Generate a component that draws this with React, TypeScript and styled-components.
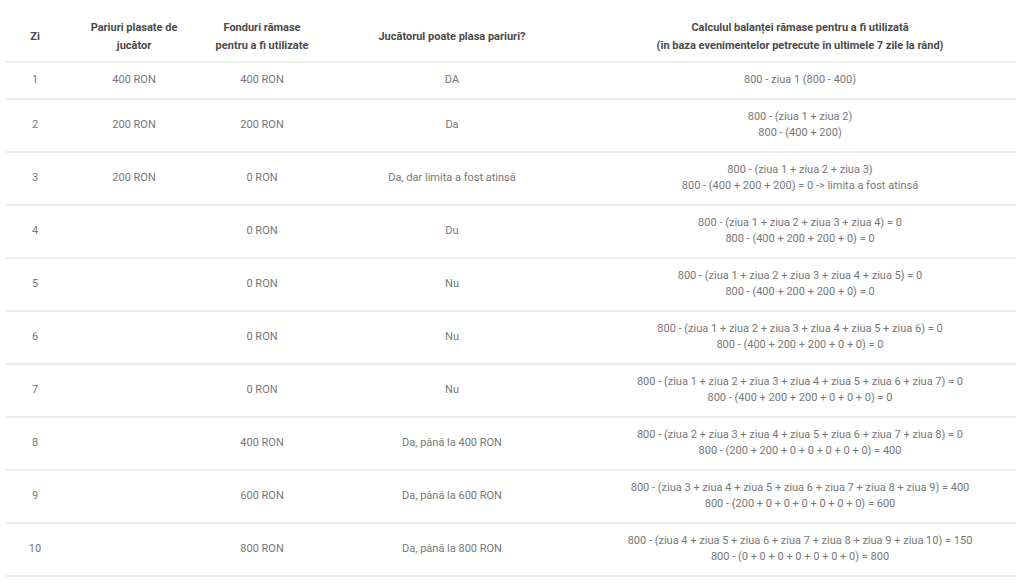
import React from "react";
import styled, { createGlobalStyle } from "styled-components";

const Global = createGlobalStyle`
  html, body { margin: 0; padding: 0; background: #fff; }
  body { font-family: Roboto, "Noto Sans", Arial, sans-serif; }
`;

const Page = styled.div`
  padding: 9px 8px 0 6px;
`;

const Table = styled.table`
  width: 1010px;
  border-collapse: collapse;
  table-layout: fixed;
  font-size: 11px;
`;

const HeadCell = styled.th`
  font-weight: 700;
  color: #4a4a4a;
  line-height: 18px;
  padding: 10px 4px 6px;
  text-align: center;
  vertical-align: middle;
  border-bottom: 2px solid #ececec;
`;

const Row = styled.tr`
  border-bottom: 2px solid #ececec;
`;

const Cell = styled.td`
  color: #777;
  line-height: 16.5px;
  padding: 9px 4px;
  text-align: center;
  vertical-align: middle;
  white-space: nowrap;
`;

const Line = styled.div``;

type R = { zi: string; plasate: string; fonduri: string; poate: string; calc: string[] };

const rows: R[] = [
  { zi: "1", plasate: "400 RON", fonduri: "400 RON", poate: "DA", calc: ["800 - ziua 1 (800 - 400)"] },
  { zi: "2", plasate: "200 RON", fonduri: "200 RON", poate: "Da", calc: ["800 - (ziua 1 + ziua 2)", "800 - (400 + 200)"] },
  { zi: "3", plasate: "200 RON", fonduri: "0 RON", poate: "Da, dar limita a fost atinsă", calc: ["800 - (ziua 1 + ziua 2 + ziua 3)", "800 - (400 + 200 + 200) = 0 -> limita a fost atinsă"] },
  { zi: "4", plasate: "", fonduri: "0 RON", poate: "Du", calc: ["800 - (ziua 1 + ziua 2 + ziua 3 + ziua 4) = 0", "800 - (400 + 200 + 200 + 0) = 0"] },
  { zi: "5", plasate: "", fonduri: "0 RON", poate: "Nu", calc: ["800 - (ziua 1 + ziua 2 + ziua 3 + ziua 4 + ziua 5) = 0", "800 - (400 + 200 + 200 + 0) = 0"] },
  { zi: "6", plasate: "", fonduri: "0 RON", poate: "Nu", calc: ["800 - (ziua 1 + ziua 2 + ziua 3 + ziua 4 + ziua 5 + ziua 6) = 0", "800 - (400 + 200 + 200 + 0 + 0) = 0"] },
  { zi: "7", plasate: "", fonduri: "0 RON", poate: "Nu", calc: ["800 - (ziua 1 + ziua 2 + ziua 3 + ziua 4 + ziua 5 + ziua 6 + ziua 7) = 0", "800 - (400 + 200 + 200 + 0 + 0 + 0) = 0"] },
  { zi: "8", plasate: "", fonduri: "400 RON", poate: "Da, până la 400 RON", calc: ["800 - (ziua 2 + ziua 3 + ziua 4 + ziua 5 + ziua 6 + ziua 7 + ziua 8) = 0", "800 - (200 + 200 + 0 + 0 + 0 + 0 + 0) = 400"] },
  { zi: "9", plasate: "", fonduri: "600 RON", poate: "Da, până la 600 RON", calc: ["800 - (ziua 3 + ziua 4 + ziua 5 + ziua 6 + ziua 7 + ziua 8 + ziua 9) = 400", "800 - (200 + 0 + 0 + 0 + 0 + 0 + 0) = 600"] },
  { zi: "10", plasate: "", fonduri: "800 RON", poate: "Da, până la 800 RON", calc: ["800 - (ziua 4 + ziua 5 + ziua 6 + ziua 7 + ziua 8 + ziua 9 + ziua 10) = 150", "800 - (0 + 0 + 0 + 0 + 0 + 0 + 0) = 800"] },
];

export default function App() {
  return (
    <>
      <Global />
      <Page>
        <Table>
          <colgroup>
            <col style={{ width: 58 }} />
            <col style={{ width: 140 }} />
            <col style={{ width: 116 }} />
            <col style={{ width: 264 }} />
            <col style={{ width: 432 }} />
          </colgroup>
          <thead>
            <tr>
              <HeadCell>Zi</HeadCell>
              <HeadCell>Pariuri plasate de<br />jucător</HeadCell>
              <HeadCell>Fonduri rămase<br />pentru a fi utilizate</HeadCell>
              <HeadCell>Jucătorul poate plasa pariuri?</HeadCell>
              <HeadCell>
                Calculul balanței rămase pentru a fi utilizată<br />
                (în baza evenimentelor petrecute în ultimele 7 zile la rând)
              </HeadCell>
            </tr>
          </thead>
          <tbody>
            {rows.map((r) => (
              <Row key={r.zi}>
                <Cell>{r.zi}</Cell>
                <Cell>{r.plasate}</Cell>
                <Cell>{r.fonduri}</Cell>
                <Cell>{r.poate}</Cell>
                <Cell>
                  {r.calc.map((c, i) => (
                    <Line key={i}>{c}</Line>
                  ))}
                </Cell>
              </Row>
            ))}
          </tbody>
        </Table>
      </Page>
    </>
  );
}
